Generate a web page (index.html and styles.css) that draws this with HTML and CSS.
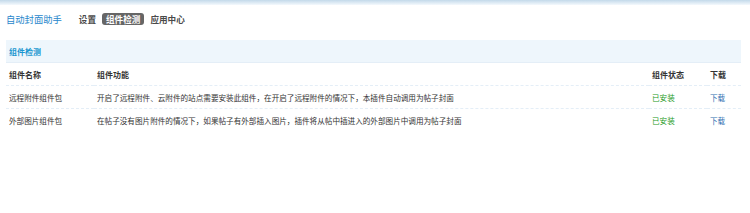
FILE: index.html
```html
<!DOCTYPE html>
<html lang="zh-CN">
<head>
    <meta charset="UTF-8">
    <title>自动封面助手 - 组件检测</title>
    <link rel="stylesheet" href="styles.css">
</head>
<body>
    <div class="topline"></div>

    <div class="itemtitle">
        <h3>自动封面助手</h3>
        <ul class="tab">
            <li><a href="#">设置</a></li>
            <li class="current"><a href="#">组件检测</a></li>
            <li><a href="#">应用中心</a></li>
        </ul>
    </div>

    <table class="tb">
        <tr class="partition">
            <th colspan="4">组件检测</th>
        </tr>
        <tr class="header">
            <th class="c-name">组件名称</th>
            <th class="c-desc">组件功能</th>
            <th class="c-state">组件状态</th>
            <th class="c-down">下载</th>
        </tr>
        <tr>
            <td>远程附件组件包</td>
            <td>开启了远程附件、云附件的站点需要安装此组件，在开启了远程附件的情况下，本插件自动调用为帖子封面</td>
            <td class="ok">已安装</td>
            <td><a href="#">下载</a></td>
        </tr>
        <tr>
            <td>外部图片组件包</td>
            <td>在帖子没有图片附件的情况下，如果帖子有外部插入图片，插件将从帖中插进入的外部图片中调用为帖子封面</td>
            <td class="ok">已安装</td>
            <td><a href="#">下载</a></td>
        </tr>
    </table>
</body>
</html>
```

FILE: styles.css
```css
body {
    margin: 0;
    background: #fff;
    font-family: "Noto Sans CJK SC", "Liberation Sans", sans-serif;
    font-size: 7.6px;
    color: #333;
}

.topline {
    height: 5px;
    background: linear-gradient(#c3d9ea, #f4f9fd);
}

.itemtitle {
    display: flex;
    align-items: center;
    padding: 7px 6px 0;
    height: 14px;
}

.itemtitle h3 {
    margin: 0 17px 0 0;
    font-size: 9.3px;
    font-weight: normal;
    color: #2887cc;
}

.tab {
    display: flex;
    align-items: center;
    gap: 6px;
    margin: 0;
    padding: 0;
    list-style: none;
}

.tab a {
    display: block;
    padding: 1px 0;
    font-size: 8.6px;
    font-weight: bold;
    color: #4a4a4a;
    text-decoration: none;
    line-height: 10px;
}

.tab .current a {
    background: #666;
    color: #fff;
    padding: 1px 4px;
    border-radius: 3px;
}

.tb {
    width: 735px;
    margin: 14px 0 0 6px;
    border-collapse: collapse;
}

.tb th,
.tb td {
    text-align: left;
    padding: 0 3px;
    height: 22px;
    border-top: 1px dashed #e4eef7;
}

.tb .partition th {
    height: 22px;
    background: #eef6fc;
    color: #1a96d0;
    font-size: 8px;
    font-weight: bold;
    border-top: none;
    border-bottom: 1px solid #e4eef7;
}

.tb .header th {
    font-size: 8px;
    color: #333;
    font-weight: bold;
    border-top: none;
}

.c-name { width: 82px; }
.c-desc { width: 549px; }
.c-state { width: 52px; }

.tb .ok {
    color: #229922;
}

.tb a {
    color: #2f6fb0;
    text-decoration: none;
}
```
